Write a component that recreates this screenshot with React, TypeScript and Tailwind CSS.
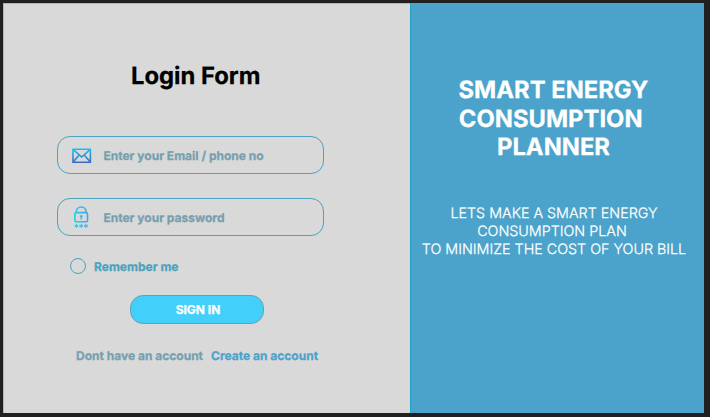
import type { ReactNode } from "react";

function MailIcon() {
  return (
    <svg width="20" height="16" viewBox="0 0 20 16" fill="none" stroke="url(#mail)" strokeWidth="1.6">
      <defs>
        <linearGradient id="mail" gradientUnits="userSpaceOnUse" x1="0" y1="1" x2="0" y2="16">
          <stop stopColor="#1cc4f4" />
          <stop offset="1" stopColor="#3b66c4" />
        </linearGradient>
      </defs>
      <path d="M1 2.3H18.4V15.2H1Z" />
      <path d="M1.4 2.6 9.7 10 18 2.6M1.4 14.8 7.2 8M18 14.8 12.2 8" />
    </svg>
  );
}

function LockIcon() {
  return (
    <svg width="16" height="24" viewBox="0 0 16 24" fill="none" stroke="url(#lock)" strokeWidth="1.6" className="ml-px">
      <defs>
        <linearGradient id="lock" gradientUnits="userSpaceOnUse" x1="1" y1="0" x2="15" y2="0">
          <stop stopColor="#22cfe2" />
          <stop offset="1" stopColor="#4aa2f2" />
        </linearGradient>
      </defs>
      <rect x="1.9" y="7.6" width="12.6" height="9.2" rx="1.4" />
      <path d="M3.3 7.6V6.9a4.9 4.9 0 0 1 9.8 0v0.7" />
      <path d="M8.2 11v3.6" strokeWidth="1.3" />
      <circle cx="8.2" cy="11.3" r="0.9" fill="url(#lock)" strokeWidth="1" />
      <path d="M3.5 18.8v4M1.6 20l3.8 1.8M5.4 20l-3.8 1.8M8.2 18.8v4M6.3 20l3.8 1.8M10.1 20l-3.8 1.8M12.9 18.8v4M11 20l3.8 1.8M14.8 20l-3.8 1.8" strokeWidth="0.9" />
    </svg>
  );
}

function Field({ icon, children }: { icon: ReactNode; children: ReactNode }) {
  return (
    <div className="flex h-[38px] w-[267px] items-center rounded-[13px] border border-[#4ba3bd] pl-3.5">
      <span className="flex w-[31px] shrink-0">{icon}</span>
      <span className="pl-[0.4px]">{children}</span>
    </div>
  );
}

export default function App() {
  return (
    <div className="h-[417px] w-[710px] overflow-hidden bg-[#202020] pt-[3px] pl-[3px] font-['Inter',sans-serif] text-xs leading-[15px] font-bold whitespace-nowrap [text-rendering:geometricPrecision] [-webkit-text-stroke:0.25px_currentColor]">
      <div className="flex h-[410px] w-[701px]">
        <main className="h-full w-[407px] shrink-0 border-t border-l border-[#b5b5b5] bg-[#d9d9d9] text-[#76a0ad]">
          <h1 className="mt-[57px] ml-[127px] text-[23.8px] leading-[29px] text-black">Login Form</h1>
          <div className="mt-[46px] ml-[53px] flex flex-col gap-6">
            <Field icon={<MailIcon />}>Enter your Email / phone no</Field>
            <Field icon={<LockIcon />}>Enter your password</Field>
          </div>
          <label className="mt-[22px] ml-[66px] flex items-center gap-2 text-[#4ba3bd]">
            <span className="size-4 rounded-full border border-[#4ba3bd]" />
            Remember me
          </label>
          <button className="mt-[21px] ml-[126px] block h-[29px] w-[134px] rounded-[13px] border border-[#5fa3b5] bg-[#42d0fa] pl-0.5 text-white">
            SIGN IN
          </button>
          <p className="mt-6 ml-[72px] flex gap-2">
            <span>Dont have an account</span>
            <a className="text-[#4ba3cb]">Create an account</a>
          </p>
        </main>
        <aside className="h-full w-[294px] shrink-0 border-l border-[#20a6c4] bg-[#4ba3cb] text-center text-white">
          <h2 className="mt-[73px] ml-[-8px] text-[23.8px] leading-[28.6px]">
            SMART ENERGY<br />CONSUMPTION&nbsp;<br />PLANNER
          </h2>
          <p className="mt-[43px] ml-[-7px] text-[14.3px] leading-[18px] font-light">
            LETS MAKE A SMART ENERGY<br />CONSUMPTION PLAN&nbsp;<br />TO MINIMIZE THE COST OF YOUR BILL
          </p>
        </aside>
      </div>
    </div>
  );
}
